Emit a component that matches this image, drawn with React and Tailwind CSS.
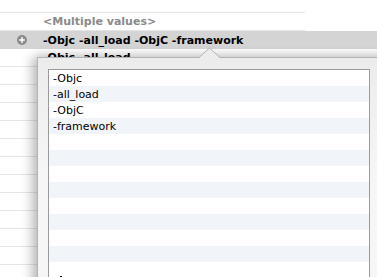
const rows = ["-Objc", "-all_load", "-ObjC", "-framework", "", "", "", "", "", "", "", "", ""];

function PlusBadge() {
  return (
    <svg width="10" height="10" viewBox="0 0 10 10" className="shrink-0">
      <circle cx="5" cy="5" r="5" fill="#8c8c8c" />
      <path d="M5 2.2v5.6M2.2 5h5.6" stroke="#fff" strokeWidth="1.6" />
    </svg>
  );
}

export default function App() {
  return (
    <div className="relative w-[377px] h-[277px] overflow-hidden bg-white font-['DejaVu_Sans',sans-serif] text-[11px] leading-none">
      <div className="flex flex-col">
        <div className="h-[13px] w-[305px] border-b border-[#e6e6e6]" />
        <div className="h-[18px] w-[305px] border-b border-[#e6e6e6] flex items-center pl-[43px] font-bold text-[#8a8a8a]">
          &lt;Multiple values&gt;
        </div>
        <div className="h-[18px] bg-[#d4d4d4] flex items-center">
          <div className="w-[43px] flex justify-center pl-[1px]">
            <PlusBadge />
          </div>
          <span className="font-bold text-black">-Objc -all_load -ObjC -framework</span>
        </div>
        <div className="h-[18px] w-[305px] border-b border-[#e6e6e6] flex items-center pl-[43px] font-bold text-black">
          -Objc -all_load
        </div>
        {Array.from({ length: 12 }).map((_, i) => (
          <div key={i} className="h-[18px] w-[305px] border-b border-[#e6e6e6]" />
        ))}
      </div>

      <div className="absolute left-[37px] top-[57px] w-[360px] h-[240px] border-l border-t border-[#b4b4b4] bg-gradient-to-b from-[#ececec] via-[#f6f6f6] to-[#f6f6f6] shadow-[-6px_0_10px_rgba(0,0,0,0.22),0_-4px_8px_rgba(0,0,0,0.08)]">
        <div className="absolute left-[10px] top-[11px] w-[322px] h-[230px] border-l border-t border-r border-[#9a9a9a] bg-white">
          {rows.map((t, i) => (
            <div
              key={i}
              className={`h-[16px] flex items-center pl-[4px] text-black ${i % 2 === 1 ? "bg-[#f1f5fa]" : "bg-white"}`}
            >
              {t}
            </div>
          ))}
        </div>
        <div className="absolute left-[22px] top-[218px] w-[2px] h-[2px] bg-black" />
      </div>

      <svg className="absolute left-[199px] top-[47px]" width="22" height="12" viewBox="0 0 22 12">
        <path d="M0 11 L10.5 1 L21 11 Z" fill="#ececec" />
        <path d="M0 10.5 L10.5 1 L21 10.5" fill="none" stroke="#b4b4b4" strokeWidth="1" />
      </svg>
    </div>
  );
}
